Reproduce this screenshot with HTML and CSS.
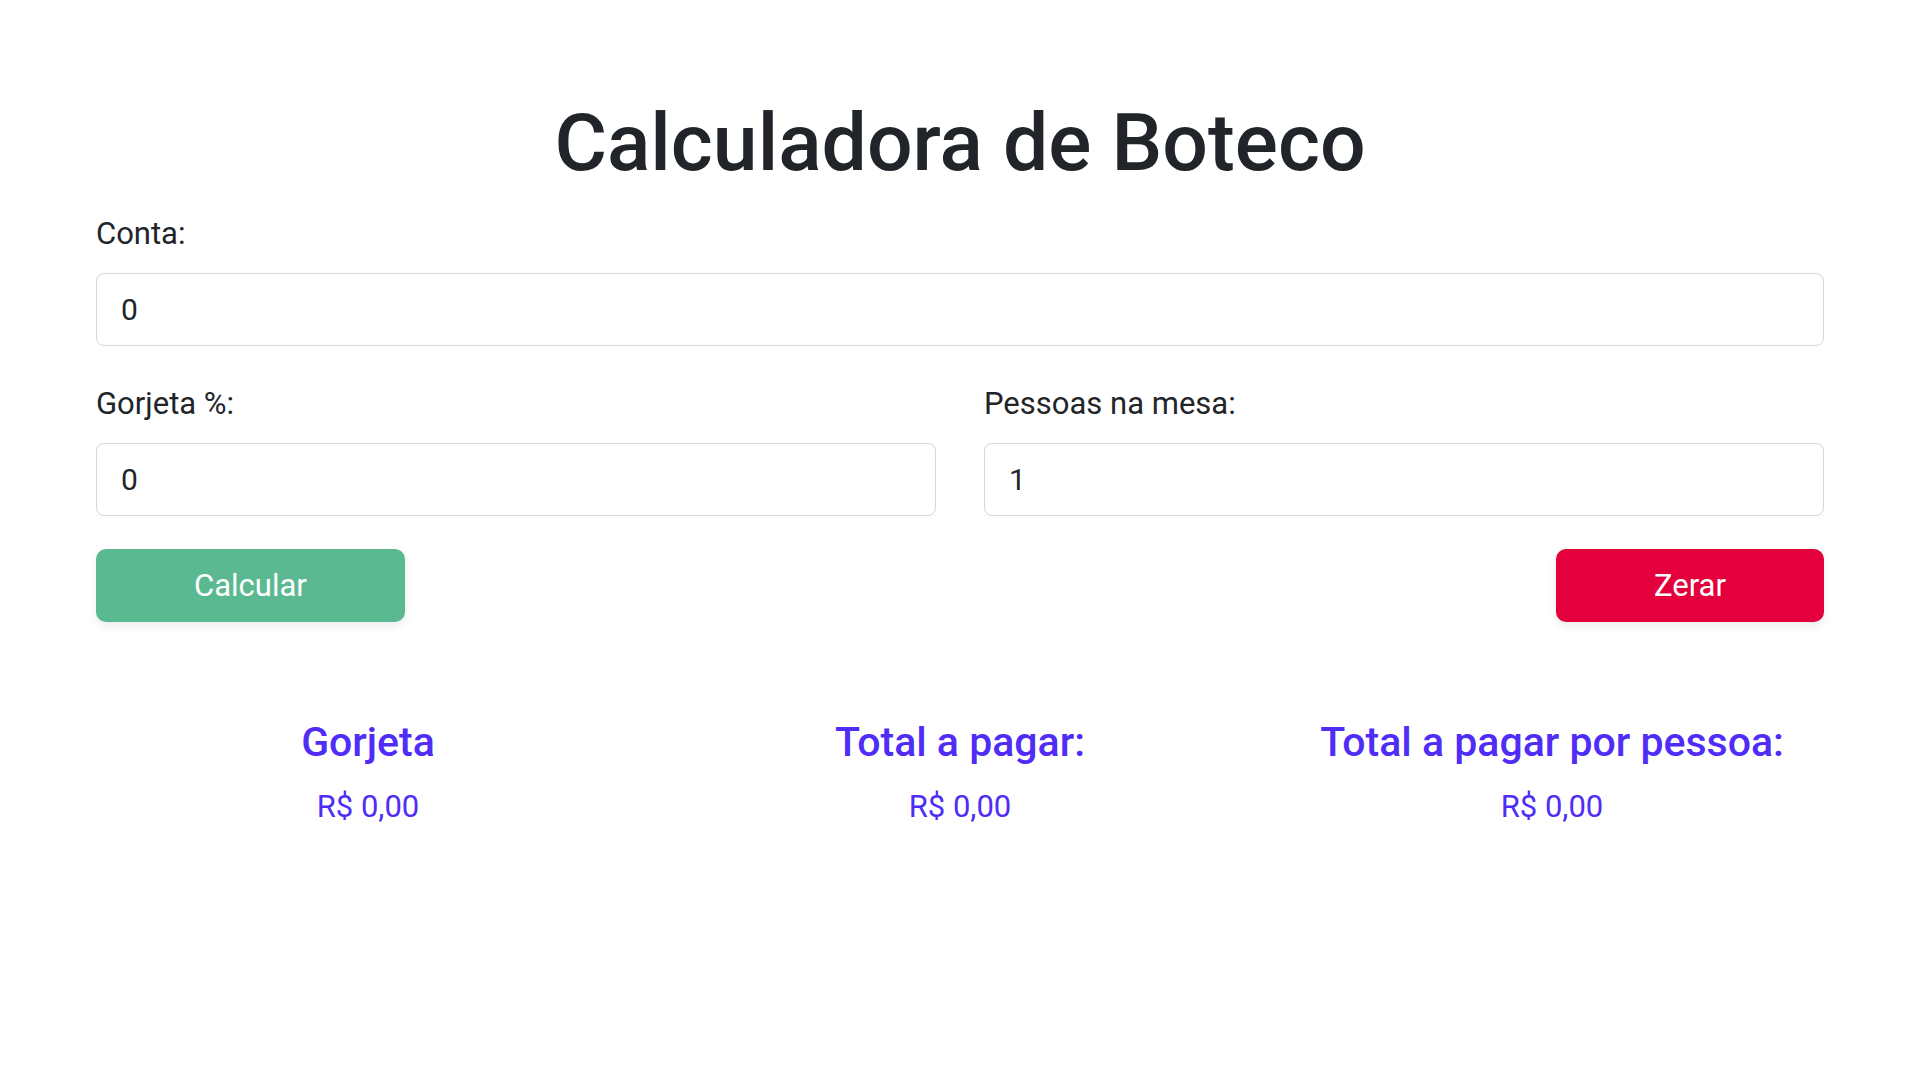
FILE: index.html
```html
<!DOCTYPE html>
<html lang="pt-BR">
<head>
<meta charset="utf-8">
<title>Calculadora de Boteco</title>
<link rel="stylesheet" href="styles.css">
</head>
<body>
<main class="app">
  <h1 class="title">Calculadora de Boteco</h1>
  <div class="field">
    <label class="label" for="conta">Conta:</label>
    <input class="input" id="conta" type="text" value="0">
  </div>
  <div class="row">
    <div class="field">
      <label class="label" for="gorjeta">Gorjeta %:</label>
      <input class="input" id="gorjeta" type="text" value="0">
    </div>
    <div class="field">
      <label class="label" for="pessoas">Pessoas na mesa:</label>
      <input class="input" id="pessoas" type="text" value="1">
    </div>
  </div>
  <div class="actions">
    <button class="btn btn-calc" type="button">Calcular</button>
    <button class="btn btn-reset" type="button">Zerar</button>
  </div>
  <section class="results">
    <div class="result">
      <h2 class="result-title">Gorjeta</h2>
      <p class="result-value">R$ 0,00</p>
    </div>
    <div class="result">
      <h2 class="result-title">Total a pagar:</h2>
      <p class="result-value">R$ 0,00</p>
    </div>
    <div class="result">
      <h2 class="result-title">Total a pagar por pessoa:</h2>
      <p class="result-value">R$ 0,00</p>
    </div>
  </section>
</main>
</body>
</html>
```
FILE: styles.css
```css
* { box-sizing: border-box; }
html, body { margin: 0; padding: 0; background: #ffffff; }
body {
  font-family: Roboto, "Liberation Sans", sans-serif;
  color: #212529;
  line-height: 1.2;
}
.app {
  padding: 95px 96px 0;
}
.title {
  margin: 0 0 24px;
  font-size: 80.5px;
  font-weight: 500;
  text-align: center;
  line-height: 1.2;
}
.field {
  display: flex;
  flex-direction: column;
  margin-bottom: 40px;
}
.label {
  font-size: 31px;
  line-height: 36px;
  margin-bottom: 21px;
}
.input {
  height: 73px;
  border: 1px solid #d3d6dc;
  border-radius: 8px;
  padding: 0 24px;
  font-family: inherit;
  font-size: 30px;
  color: #212529;
  background: #fff;
  outline: none;
}
.row {
  display: grid;
  grid-template-columns: 1fr 1fr;
  column-gap: 48px;
}
.row .field { margin-bottom: 0; }
.actions {
  display: flex;
  justify-content: space-between;
  margin-top: 33px;
}
.btn {
  height: 73px;
  padding: 0 98px;
  border: none;
  border-radius: 10px;
  font-family: inherit;
  font-size: 31px;
  color: #fff;
  box-shadow: 0 4px 10px rgba(0, 0, 0, 0.08);
  cursor: pointer;
}
.btn-calc { background: #5bb991; }
.btn-reset { background: #e4003c; }
.results {
  display: grid;
  grid-template-columns: repeat(3, 1fr);
  column-gap: 48px;
  margin-top: 96px;
  text-align: center;
  color: #4f2df6;
}
.result-title {
  margin: 0 0 22px;
  font-size: 41px;
  font-weight: 500;
  line-height: 1.2;
}
.result-value {
  margin: 0;
  font-size: 31px;
  line-height: 36px;
}
```
